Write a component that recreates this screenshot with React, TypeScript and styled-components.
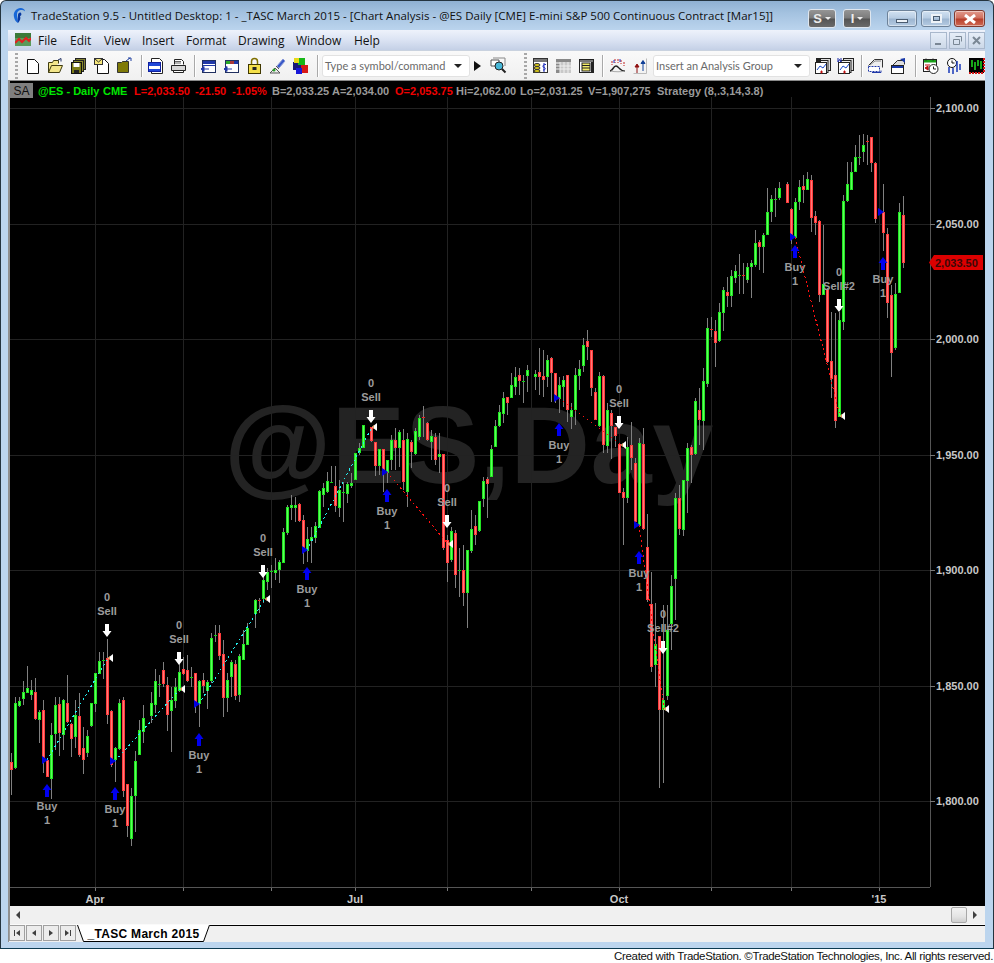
import React from 'react';
import styled, { createGlobalStyle } from 'styled-components';

const Global = createGlobalStyle`
  html, body { margin: 0; padding: 0; background: #fff; }
  #root { width: 994px; height: 963px; overflow: hidden; }
`;

/* ---------- window chrome ---------- */
const Page = styled.div`
  width: 994px;
  height: 963px;
  display: flex;
  flex-direction: column;
  font-family: "Open Sans", "Liberation Sans", sans-serif;
`;
const Win = styled.div`
  box-sizing: border-box;
  width: 994px;
  height: 949px;
  flex: none;
  display: flex;
  flex-direction: column;
  padding: 0 8px 6px 7px;
  border: 1px solid #24343f;
  border-bottom-color: #0c3b52;
  border-radius: 6px 6px 0 0;
  background: linear-gradient(180deg, #8fb0d2 0, #a4c2e0 12px, #bcd5ee 30px, #bcd5ee 100%);
`;
const TitleBar = styled.div`
  height: 29px;
  flex: none;
  display: flex;
  align-items: center;
`;
const TitleLogo = styled.svg`
  margin-left: 4px;
  flex: none;
`;
const TitleText = styled.span`
  margin-left: 5px;
  font-size: 11.5px;
  letter-spacing: 0.01px;
  color: #101010;
  white-space: nowrap;
`;
const TitleRight = styled.div`
  margin-left: auto;
  display: flex;
  align-items: flex-start;
  height: 29px;
`;
const AppBadge = styled.span`
  box-sizing: border-box;
  width: 28px;
  height: 19px;
  margin: 8px 7px 0 0;
  border: 1px solid #dfe6ee;
  border-radius: 3px;
  background: linear-gradient(180deg, #959595 0, #7c7c7c 45%, #555 55%, #6a6a6a 100%);
  color: #ececec;
  font: bold 13px "Liberation Sans", sans-serif;
  display: flex;
  align-items: center;
  justify-content: center;
  gap: 3px;
`;
const Caret = styled.i<{ $c?: string; $s?: number }>`
  display: block;
  width: 0;
  height: 0;
  border-style: solid;
  border-color: ${p => p.$c ?? '#eee'} transparent transparent transparent;
  border-width: ${p => p.$s ?? 3}px ${p => p.$s ?? 3}px 0 ${p => p.$s ?? 3}px;
`;
const CapBtn = styled.span<{ $w: number; $close?: boolean; $ml?: number }>`
  box-sizing: border-box;
  width: ${p => p.$w}px;
  height: 17px;
  margin: 9px 0 0 ${p => p.$ml ?? 0}px;
  border: 1px solid ${p => (p.$close ? '#7d3a30' : '#6d8299')};
  border-radius: 3px;
  box-shadow: inset 0 0 0 1px rgba(255,255,255,.45);
  background: ${p => p.$close
    ? 'linear-gradient(180deg, #e29a8c 0, #d0705f 45%, #b8402c 55%, #cf6a55 100%)'
    : 'linear-gradient(180deg, #d2e2f2 0, #b8cde3 45%, #9db6d1 55%, #b5cbe2 100%)'};
  display: flex;
  align-items: center;
  justify-content: center;
`;
const MinGlyph = styled.i`
  display: block;
  width: 10px;
  height: 2px;
  margin-top: 5px;
  background: #eef3f8;
  border: 1px solid #4a5c70;
`;
const MaxGlyph = styled.i`
  display: block;
  box-sizing: border-box;
  width: 11px;
  height: 9px;
  background: transparent;
  border: 2px solid #eef3f8;
  outline: 1px solid #4a5c70;
  outline-offset: -3px;
`;
const MenuBar = styled.div`
  height: 20px;
  flex: none;
  display: flex;
  align-items: center;
  background: linear-gradient(180deg, #eef2fb 0, #dbe3f3 50%, #c4d0e6 100%);
`;
const MenuLogo = styled.span`
  width: 16px;
  height: 16px;
  margin: 0 7px 0 7px;
  display: flex;
`;
const MenuItem = styled.span<{ $w: number }>`
  width: ${p => p.$w}px;
  font-size: 12px;
  color: #111;
`;
const MdiGroup = styled.div`
  margin-left: auto;
  display: flex;
  gap: 2px;
  height: 17px;
`;
const MdiBtn = styled.span`
  box-sizing: border-box;
  width: 17px;
  height: 17px;
  border: 1px solid #a9b8cc;
  background: linear-gradient(180deg, #e6eef8, #ccd8e8);
  display: flex;
  align-items: center;
  justify-content: center;
`;

/* ---------- toolbar ---------- */
const Toolbar = styled.div`
  height: 30px;
  flex: none;
  display: flex;
  align-items: center;
  background: linear-gradient(180deg, #f9f9f9, #f0f0f0);
  border-top: 1px solid #c9d2df;
  box-sizing: border-box;
`;
const Grip = styled.span<{ $ml: number; $mr: number }>`
  flex: none;
  width: 3px;
  height: 26px;
  margin: 0 ${p => p.$mr}px 0 ${p => p.$ml}px;
  background: repeating-linear-gradient(180deg, #a8a8a8 0 2px, transparent 2px 4px);
`;
const Btn = styled.span<{ $ml?: number; $w?: number }>`
  flex: none;
  width: ${p => p.$w ?? 23}px;
  height: 24px;
  margin-left: ${p => p.$ml ?? 0}px;
  display: flex;
  align-items: center;
  justify-content: center;
`;
const Sep = styled.span<{ $ml: number }>`
  flex: none;
  width: 1px;
  height: 22px;
  margin-left: ${p => p.$ml}px;
  background: #a9a9a9;
  border-right: 1px solid #fff;
`;
const Combo = styled.span<{ $w: number; $ml: number }>`
  box-sizing: border-box;
  flex: none;
  width: ${p => p.$w}px;
  height: 22px;
  margin-left: ${p => p.$ml}px;
  padding: 0 7px 0 2px;
  background: #fff;
  border: 1px solid #e2e2e2;
  border-radius: 3px;
  display: flex;
  align-items: center;
  justify-content: space-between;
  font: 11px Lato, "Open Sans", sans-serif;
  color: #6a6a6a;
  white-space: nowrap;
`;

/* ---------- chart ---------- */
const Pane = styled.div`
  flex: none;
  border-left: 2px solid #8f8f8f;
  display: flex;
  flex-direction: column;
`;
const ChartRule = styled.div`
  height: 1px;
  background: #8a8a8a;
`;
const ChartFrame = styled.div`
  position: relative;
  width: 975px;
  height: 825px;
  background: #000;
`;
const ChartSvg = styled.svg`
  display: block;
  font-family: "Liberation Sans", Arial, sans-serif;
`;
const Status = styled.div`
  position: absolute;
  left: 0;
  top: 1px;
  display: flex;
  align-items: center;
  height: 17px;
  font: bold 11px "Liberation Sans", Arial, sans-serif;
  white-space: nowrap;
`;
const SaBox = styled.span`
  width: 23px;
  height: 15px;
  margin-right: 5px;
  background: #7f7f7f;
  color: #111;
  font-weight: normal;
  font-size: 12px;
  display: flex;
  align-items: center;
  justify-content: center;
`;
const Stat = styled.span<{ $c: 'g' | 'r' | 'n'; $x: number }>`
  position: absolute;
  left: ${p => p.$x}px;
  color: ${p => (p.$c === 'g' ? '#00e800' : p.$c === 'r' ? '#f00000' : '#9a9a9a')};
`;
const Watermark = styled.text`
  font-size: 110px;
  font-weight: bold;
  letter-spacing: 0.5px;
  fill: #232323;
`;
const AxisLabel = styled.text`
  font-size: 11px;
  font-weight: bold;
  fill: #c8c8c8;
`;
const SigLabel = styled.text`
  font-size: 11px;
  font-weight: bold;
  fill: #9c9c9c;
  text-anchor: middle;
`;
const TagLabel = styled.text`
  font-size: 11px;
  font-weight: bold;
  fill: #3a0808;
`;

/* ---------- bottom ---------- */
const ScrollBar = styled.div`
  height: 19px;
  display: flex;
  align-items: center;
  justify-content: space-between;
  padding: 0 6px 0 4px;
  background: #f0f0f0;
  border-bottom: 1px solid #fafafa;
  box-sizing: border-box;
`;
const ScrollEnd = styled.div`
  display: flex;
  align-items: center;
  gap: 4px;
`;
const Thumb = styled.span`
  box-sizing: border-box;
  width: 16px;
  height: 16px;
  border: 1px solid #a8a8a8;
  border-radius: 2px;
  background: linear-gradient(180deg, #f2f2f2 0, #e4e4e4 60%, #cfcfcf 100%);
`;
const TabRow = styled.div`
  height: 17px;
  display: flex;
  margin-left: -1px;
  background: #f0f0f0;
`;
const TabNav = styled.span`
  box-sizing: border-box;
  flex: none;
  width: 16px;
  height: 16px;
  margin-right: 1px;
  border: 1px solid #a0a0a0;
  background: #ececec;
  display: flex;
  align-items: center;
  justify-content: center;
`;
const Tab = styled.div`
  position: relative;
  flex: none;
  width: 133px;
  height: 17px;
  display: flex;
  align-items: center;
  justify-content: center;
  font: bold 12px "Liberation Sans", Arial, sans-serif;
  letter-spacing: 0.3px;
  color: #000;
`;
const TabShape = styled.svg`
  position: absolute;
  left: 0;
  top: 0;
`;
const TabLabel = styled.span`
  position: relative;
`;
const TabFill = styled.div`
  flex: 1;
  border-top: 1px solid #000;
`;
const Footer = styled.div`
  height: 14px;
  flex: none;
  padding-right: 1px;
  text-align: right;
  font: 11.5px/14px "Liberation Sans", Arial, sans-serif;
  letter-spacing: -0.34px;
  color: #111;
  white-space: nowrap;
`;

/* ---------- candle data: [wick top, body top, body bottom, wick bottom, colour], in 3x crop units ---------- */
type Row = [number, number, number, number, string] | null;
type Seg = { o: number; n: number; rows: Row[] };
const segs: Seg[] = [
  { o: 580, n: 0, rows: [
    [520,546,570,645,'r'],[350,370,564,566,'g'],[350,364,378,380,'g'],[303,337,357,375,'g'],[258,325,339,340,'g'],
    [300,331,345,360,'g'],[295,337,417,420,'r'],[390,397,419,490,'g'],[360,391,536,580,'r'],[540,541,591,592,'r'],
    [430,465,597,656,'g'],[352,376,461,510,'g'],[350,373,459,528,'r'],[358,361,465,510,'g'],[285,370,425,430,'r'],
    [430,433,477,532,'r'],[360,406,470,505,'g'],[340,409,524,530,'r'],[440,505,540,583,'r'],[450,469,519,530,'g'],
    [370,370,437,440,'g'],[280,280,371,395,'g'],[215,243,281,283,'g'],[215,241,241,297,'g'],[177,235,404,432,'r'],
    [390,394,556,560,'r'],[500,505,541,605,'g'],[358,370,507,510,'g'],[350,361,632,650,'r'],[612,612,737,770,'r'],
    [625,649,776,798,'g'],[513,544,647,757,'g'],[420,451,525,525,'g'],[375,415,455,490,'g'],null,
    [336,370,407,430,'g'],[268,304,374,400,'g'],[285,313,313,350,'g'],[245,271,313,320,'r'],[290,316,404,452,'r'],
    [320,361,392,515,'g'],[295,322,362,385,'g'],[240,277,333,335,'g'],[230,268,281,285,'r'],[225,271,302,305,'r'],
    [260,291,291,320,'g'],[280,280,370,400,'r'],[300,304,372,440,'g'],[280,301,317,340,'r'],[300,307,333,387,'g'],
    [160,175,304,308,'g'],[135,165,165,185,'g'],[135,160,227,240,'r'],[180,223,353,410,'r'],[280,301,353,395,'g'],
    [240,247,290,350,'g'],[240,253,347,360,'r'],[222,229,344,365,'g'],[150,193,239,240,'g'],[130,145,194,195,'g'],
    null,[58,61,103,145,'g'],[55,59,59,100,'r'],
  ] },
  { o: 480, n: 63, rows: [
    [270,300,357,370,'g'],[265,277,305,330,'g'],[255,274,274,325,'g'],[235,270,280,300,'g'],[240,246,270,310,'g'],
    [145,156,248,250,'g'],[75,81,160,165,'g'],
  ] },
  { o: 340, n: 70, rows: [
    [465,495,503,540,'g'],[470,495,503,545,'g'],[490,492,543,545,'r'],[525,541,630,672,'r'],[560,597,632,665,'g'],
    [560,591,604,668,'g'],[545,559,594,610,'g'],[450,453,564,565,'g'],[430,444,465,500,'g'],[395,423,456,460,'g'],
    [378,427,427,430,'g'],[378,438,498,515,'r'],[420,450,504,530,'g'],[425,457,457,545,'g'],[425,432,462,490,'g'],
    [400,429,438,445,'g'],[339,339,420,420,'g'],[310,324,340,345,'g'],[255,255,324,325,'g'],null,
    [262,262,303,305,'r'],[306,306,378,408,'r'],[327,327,378,405,'g'],[327,327,390,455,'r'],[360,360,399,430,'g'],
    [285,300,360,390,'g'],[265,300,324,390,'r'],[270,276,324,380,'g'],[268,300,426,450,'r'],[280,297,456,500,'g'],
    [300,306,336,385,'r'],[265,273,342,345,'g'],[225,234,290,300,'g'],[198,232,232,290,'r'],[245,249,300,302,'r'],
    [270,288,306,360,'g'],[280,291,360,375,'r'],[280,342,351,400,'g'],[342,342,624,630,'r'],[585,600,668,725,'r'],
    [560,573,660,665,'g'],[570,579,704,745,'r'],[625,691,691,770,'g'],[615,690,760,797,'r'],[630,630,760,863,'g'],
    [510,568,634,640,'g'],[525,558,585,615,'r'],[484,484,573,575,'g'],[410,423,477,500,'g'],[410,417,432,535,'r'],
    [315,327,411,412,'g'],[240,258,321,322,'g'],[195,216,258,262,'g'],[155,174,222,250,'g'],[170,171,189,225,'r'],
    [100,135,174,175,'g'],[82,111,141,165,'g'],[85,105,123,165,'r'],[105,124,124,188,'g'],[75,90,108,155,'g'],
    null,[90,102,111,150,'g'],[25,96,111,165,'r'],[30,108,120,172,'r'],[45,60,111,140,'g'],
    [50,54,99,185,'r'],[99,99,168,190,'r'],[110,135,177,220,'g'],[108,120,141,200,'g'],[105,105,210,245,'r'],
    [190,210,231,268,'g'],[85,105,210,255,'g'],[60,87,108,150,'g'],
  ] },
  { o: 320, n: 143, rows: [
    [55,75,137,155,'g'],[30,63,80,120,'r'],[90,90,203,228,'r'],[205,216,299,300,'r'],[155,168,317,320,'g'],
    [165,168,375,400,'r'],[250,270,378,400,'g'],[270,280,317,416,'r'],[320,321,347,380,'r'],[370,372,519,520,'r'],
    [505,516,533,675,'r'],[350,381,533,550,'g'],[305,375,414,450,'r'],[415,429,606,620,'r'],[355,369,618,620,'g'],
    [325,372,627,630,'r'],[583,681,840,845,'r'],[755,852,1041,1055,'r'],[848,972,1035,1100,'g'],[948,948,1170,1405,'r'],
    [855,1140,1170,1390,'g'],[855,930,1128,1140,'g'],[765,798,912,990,'g'],[520,534,777,900,'g'],[495,534,627,645,'r'],
    [480,480,630,648,'g'],[370,384,483,580,'g'],[375,381,405,490,'r'],[235,243,402,405,'g'],[205,270,300,375,'r'],
    [145,183,303,390,'g'],[-6,24,192,200,'g'],[-10,28,28,50,'r'],[0,33,69,140,'r'],
  ] },
  { o: 120, n: 177, rows: [
    [550,576,663,665,'g'],[500,510,578,632,'g'],[470,516,527,560,'r'],[450,468,527,560,'g'],[435,453,473,490,'g'],
    [403,466,466,522,'g'],[430,466,466,522,'r'],[430,441,480,490,'g'],[420,429,441,533,'g'],[330,369,435,440,'g'],
    [360,366,381,450,'r'],[340,345,381,460,'g'],[205,276,345,345,'g'],[225,237,276,305,'g'],[205,237,237,290,'g'],
    [185,204,234,240,'g'],null,[185,192,249,250,'r'],[265,267,345,372,'r'],[235,246,354,354,'g'],
    [180,201,246,270,'g'],[165,198,210,250,'r'],[155,177,210,210,'g'],[165,180,294,335,'r'],[272,288,309,345,'r'],
    [300,303,525,545,'r'],[315,492,525,525,'g'],[505,507,726,730,'r'],[575,723,777,835,'r'],[580,765,903,925,'r'],
    [575,600,891,890,'g'],[225,243,606,630,'g'],[125,192,243,245,'g'],[125,156,210,210,'g'],[75,111,156,155,'g'],
    [45,112,112,135,'g'],[42,75,96,125,'g'],[45,63,63,135,'r'],[50,51,129,155,'r'],[125,129,297,310,'r'],
    null,[192,276,339,392,'r'],[325,342,549,595,'r'],[495,525,699,770,'r'],[490,522,684,690,'g'],
    [250,276,519,520,'g'],[228,285,429,445,'r'],
  ] },
];

const Candle = ({ n, o, r }: { n: number; o: number; r: Exclude<Row, null> }) => {
  const x = 10 + 4 * n;
  const y = (v: number) => Math.round(o + v / 3);
  const [wt, bt, bb, wb, c] = r;
  const red = c === 'r';
  const doji = bt === bb;
  const top = y(bt), h = Math.max(1, y(bb) - y(bt));
  return (
    <g>
      <rect x={x + 1} y={y(wt)} width={1} height={Math.max(1, y(wb) - y(wt))} fill="#808080" />
      {doji
        ? <rect x={x} y={top} width={3} height={1} fill={red ? '#f02020' : '#10d010'} />
        : <>
            <rect x={x} y={top} width={3} height={h} fill={red ? '#ff3c3c' : '#22e622'} />
            {h > 2 && <rect x={x + 1} y={top + 1} width={1} height={h - 2} fill={red ? '#ff7a7a' : '#5cff5c'} />}
          </>}
    </g>
  );
};

const buys: [number, number][] = [[47,784],[115,787],[199,733],[307,567],[387,489],[559,423],[639,551],[795,245],[883,257]];
const sells: [number, number, string][] = [
  [107,624,'Sell'],[179,652,'Sell'],[263,565,'Sell'],[371,410,'Sell'],[447,515,'Sell'],[619,416,'Sell'],[663,641,'Sell#2'],[839,299,'Sell#2'],
];
const entries: [number, number][] = [[42,760],[110,761],[194,704],[302,550],[382,472],[554,398],[634,525],[790,237],[878,212]];
const exits: [number, number][] = [[108,658],[180,689],[265,599],[372,427],[448,544],[621,445],[664,709],[840,416]];
const trades: [number, number, number, number, string][] = [
  [47,760,108,658,'#22f0f0'],[115,761,180,689,'#22f0f0'],[199,704,265,599,'#22f0f0'],[307,550,372,427,'#22f0f0'],
  [387,472,448,544,'#ff1010'],[559,398,621,445,'#ff1010'],[639,525,664,709,'#ff1010'],[795,237,840,416,'#ff1010'],
];
const gridX = [95,183,271,355,447,531,619,711,791,879];
const prices: [number, string][] = [[108,'2,100.00'],[224,'2,050.00'],[339,'2,000.00'],[455,'1,950.00'],[570,'1,900.00'],[686,'1,850.00'],[801,'1,800.00']];
const months: [number, string][] = [[95,'Apr'],[355,'Jul'],[619,'Oct'],[879,"'15"]];

const Chart = () => (
  <ChartSvg width={975} height={825} viewBox="10 81 975 825">
    <Watermark x={224} y={483}>@ES,Day</Watermark>
    {gridX.map(x => <rect key={x} x={x} y={97} width={1} height={790} fill="#222" />)}
    {prices.map(([y]) => <rect key={y} x={10} y={y} width={920} height={1} fill="#222" />)}
    {segs.map(s => s.rows.map((r, i) => r && <Candle key={s.n + i} n={s.n + i} o={s.o} r={r} />))}
    {trades.map(([a, b, c, d, col], i) => (
      <line key={i} x1={a} y1={b} x2={c} y2={d} stroke={col} strokeWidth={1} strokeDasharray="2 3" shapeRendering="crispEdges" />
    ))}
    {entries.map(([x, y], i) => <polygon key={i} points={`${x},${y - 4} ${x + 6},${y} ${x},${y + 4}`} fill="#0000e0" />)}
    {exits.map(([x, y], i) => (
      <g key={i}>
        <polygon points={`${x},${y} ${x + 5},${y - 4} ${x + 5},${y + 4}`} fill="#fff" />
        <polygon points={`${x},${y} ${x + 2},${y - 2} ${x + 2},${y + 2}`} fill="#e8a060" />
      </g>
    ))}
    {buys.map(([x, y], i) => (
      <g key={i}>
        <path d={`M${x} ${y}l4.500 6h-2.500v7h-4v-7h-2.500z`} fill="#0000f0" />
        <SigLabel x={x} y={y + 26}>Buy</SigLabel>
        <SigLabel x={x} y={y + 40}>1</SigLabel>
      </g>
    ))}
    {sells.map(([x, y, t], i) => (
      <g key={i}>
        <SigLabel x={x} y={y - 9}>{t}</SigLabel>
        <SigLabel x={x} y={y - 23}>0</SigLabel>
        <path d={`M${x} ${y + 13}l-4.500-6h2.500v-7h4v7h2.500z`} fill="#fff" />
      </g>
    ))}
    <rect x={930} y={97} width={1} height={790} fill="#555" />
    <rect x={10} y={887} width={920} height={1} fill="#555" />
    {prices.map(([y, t]) => (
      <g key={t}>
        <rect x={930} y={y} width={5} height={1} fill="#777" />
        <AxisLabel x={936} y={y + 4}>{t}</AxisLabel>
      </g>
    ))}
    {gridX.map(x => <rect key={x} x={x} y={888} width={1} height={3} fill="#777" />)}
    {months.map(([x, t]) => <AxisLabel key={t} x={x} y={903} textAnchor="middle">{t}</AxisLabel>)}
    <polygon points="929,262.500 934,255 983,255 983,270 934,270" fill="#dc0000" />
    <TagLabel x={935} y={267}>2,033.50</TagLabel>
  </ChartSvg>
);

/* ---------- toolbar icons ---------- */
const I = ({ children }: { children: React.ReactNode }) => (
  <svg width={17} height={18} viewBox="0 0 17 18">{children}</svg>
);
const Page17 = ({ x = 3 }: { x?: number }) => (
  <path d={`M${x + .5} 2.500h7l4 4v10h-11z`} fill="#fff" stroke="#111" />
);
const Win17 = ({ bar = '#2038a8' }: { bar?: string }) => (
  <>
    <rect x="2.500" y="3.500" width="13" height="12" fill="#fff" stroke="#203060" />
    <rect x="3" y="4" width="12" height="3" fill={bar} />
  </>
);
const icons: React.ReactNode[] = [
  <I key="new"><Page17 /></I>,
  <I key="open"><path d="M1.500 15.500v-10h4l1 -2h5v3M1.500 15.500l3-7h11l-3 7z" fill="#f3e68a" stroke="#403c10" /><path d="M11 3l3-1.500M14 1.500v3" stroke="#203060" fill="none" /></I>,
  <I key="saveall"><rect x="5.500" y="1.500" width="10" height="11" fill="#7f7f30" stroke="#222" /><rect x="3.500" y="3.500" width="10" height="11" fill="#8a8a2a" stroke="#222" /><rect x="1.500" y="5.500" width="10" height="11" fill="#7c7c16" stroke="#111" /><rect x="3.500" y="6" width="6" height="4" fill="#fff" /><rect x="4" y="13" width="5" height="3" fill="#222" /></I>,
  <I key="mail"><Page17 x={4} /><rect x="1.500" y="1.500" width="8" height="6" fill="#f6e77a" stroke="#333" /><path d="M2 2l3.500 3 3.500-3" fill="none" stroke="#333" /></I>,
  <I key="folder"><path d="M1.500 15.500v-10h4l1-1h6v11z" fill="#7f7a08" stroke="#333" /><path d="M10 4l4-3M12 1h3v3" fill="none" stroke="#2040a0" /></I>,
  <I key="preview"><path d="M4.500 1.500h8l3 3v12h-11z" fill="#fff" stroke="#222" /><rect x="1.500" y="5.500" width="12" height="9" fill="#fff" stroke="#1020a0" /><rect x="2" y="6" width="11" height="3" fill="#2048d8" /><rect x="2" y="12" width="11" height="2" fill="#2048d8" /></I>,
  <I key="print"><path d="M4.500 7.500v-5h7l2 2v3" fill="#fff" stroke="#222" /><path d="M1.500 8.500h14v5h-14z" fill="#d8d8d8" stroke="#222" /><path d="M3.500 13.500h10v2h-10z" fill="#fff" stroke="#222" /><path d="M5 4.500h6M5 6h6" stroke="#666" /></I>,
  <I key="wa1"><Win17 /><rect x="3" y="8" width="12" height="1" fill="#2038a8" /><path d="M1 12l3-2.500v5zM4 12h5" fill="#2038a8" stroke="#2038a8" /></I>,
  <I key="wa2"><Win17 bar="#a83838" /><rect x="3" y="4" width="4" height="3" fill="#28a828" /><rect x="11" y="4" width="4" height="3" fill="#2038a8" /><path d="M1 12l3-2.500v5zM4 12h5" fill="#2038a8" stroke="#2038a8" /></I>,
  <I key="lock"><path d="M5.500 8V4.500a3 3 0 0 1 6 0V8" fill="none" stroke="#807000" strokeWidth="1.500" /><rect x="2.500" y="7.500" width="12" height="9" fill="#f4e04a" stroke="#403800" /><rect x="6.500" y="10" width="4" height="3" fill="#222" /></I>,
  <I key="sat"><path d="M8 9l6-7 2 2-6 7z" fill="#3858c8" stroke="#8898d8" /><path d="M7 9l3 3M1 16l5-5 5 5z" fill="#eee" stroke="#555" /><circle cx="5" cy="13" r="1.500" fill="#28a028" /></I>,
  <I key="cubes"><rect x="1" y="5" width="8" height="8" fill="#181878" /><rect x="6" y="1" width="7" height="7" fill="#18b818" /><rect x="2" y="1" width="5" height="5" fill="#e8d818" /><rect x="9" y="8" width="7" height="8" fill="#d81818" /><rect x="4" y="11" width="6" height="6" fill="#1818d8" /></I>,
  <I key="go"><path d="M1 3h8v6H1z" fill="#fff" stroke="#555" /><circle cx="9" cy="9" r="4" fill="#48b8d8" stroke="#222" /><path d="M12 12l3.500 3.500" stroke="#222" strokeWidth="2" /><path d="M3 1h12v8" fill="none" stroke="#888" /></I>,
  <I key="ta"><rect x="1.500" y="1.500" width="14" height="14" fill="#fff" stroke="#333" /><rect x="2" y="2" width="13" height="3" fill="#777" /><ellipse cx="5" cy="8" rx="3" ry="1.500" fill="#d8c818" stroke="#333" /><ellipse cx="5" cy="11" rx="3" ry="1.500" fill="#d8c818" stroke="#333" /><ellipse cx="5" cy="14" rx="3" ry="1.500" fill="#d8c818" stroke="#333" /><path d="M12 6v9M14 7.500c-3-1-4 3 -2 3s1.500 3-1 2.500" fill="none" stroke="#1828b8" /></I>,
  <I key="grid-off"><rect x="1" y="2" width="15" height="14" fill="#c8c8c8" /><rect x="1" y="2" width="15" height="3" fill="#888" /><rect x="1" y="7" width="4" height="9" fill="#8a8a8a" /><path d="M1 9h15M1 12h15M5 5v11M9 5v11M13 5v11" stroke="#f0f0f0" /></I>,
  <I key="grid"><rect x="1.500" y="2.500" width="14" height="13" fill="#fff" stroke="#222" /><rect x="2" y="3" width="13" height="2" fill="#777" /><rect x="4" y="6" width="8" height="8" fill="#f4ec6a" stroke="#222" /><path d="M4 8.500h8M4 11h8" stroke="#222" /><rect x="13" y="5" width="2" height="10" fill="#222" /></I>,
  <I key="curve"><path d="M1 14c3 0 3-5 6-5s3 5 9 5" fill="none" stroke="#222" strokeWidth="1.500" /><path d="M2 14c3 1 11 1 14 0" fill="none" stroke="#aaa" /><path d="M3 4v4M6 2v4M9 2v4M12 3v4M15 5v4" stroke="#c02020" strokeDasharray="2 1" /><path d="M5 3v3M11 2v3" stroke="#2038c8" /></I>,
  <I key="updown"><path d="M5 16V8M3 10h4l-2-3z" stroke="#901010" fill="#901010" /><path d="M11 14V4M9 6.500h4l-2-3z" stroke="#104098" fill="#104098" /><path d="M14.500 1.500v15h-13" fill="none" stroke="#bbb" /></I>,
  <I key="ins1"><rect x="6.500" y="1.500" width="10" height="12" fill="#ddd" stroke="#222" /><rect x="4" y="3.500" width="10" height="12" fill="#eee" stroke="#222" /><rect x="1.500" y="5.500" width="11" height="11" fill="#fff" stroke="#222" /><rect x="2" y="1" width="5" height="4" fill="#222" /><path d="M3 13l3-4 3 2 3-4" fill="none" stroke="#1848c8" /><path d="M6 15h3M7.500 13.500v3" stroke="#c01010" /></I>,
  <I key="ins2"><rect x="6.500" y="1.500" width="10" height="12" fill="#ddd" stroke="#222" /><rect x="4" y="3.500" width="10" height="12" fill="#eee" stroke="#222" /><rect x="1.500" y="5.500" width="11" height="11" fill="#fff" stroke="#222" /><path d="M1 1v4l1.500-2.500L4 5V1" fill="none" stroke="#1828a8" /><path d="M3 13l3-4 3 2 3-4" fill="none" stroke="#1848c8" /><path d="M6 15h3M7.500 13.500v3" stroke="#c01010" /></I>,
  <I key="doc1"><path d="M1.500 8.500l6-6h8v8" fill="#eee" stroke="#333" /><path d="M1.500 9.500h11v5h-11z" fill="#fff" stroke="#2038a8" strokeDasharray="2 1" /><path d="M3 8l5-4h6" fill="none" stroke="#888" /><path d="M5 15.500h9v-2" fill="none" stroke="#2038a8" /></I>,
  <I key="doc2"><path d="M2.500 8.500l5-5h7v4" fill="#ddd" stroke="#333" /><rect x="1.500" y="8.500" width="12" height="8" fill="#fff" stroke="#222" /><rect x="2" y="9" width="11" height="2" fill="#1838a8" /><path d="M10 2l5-1v5z" fill="#1838a8" /></I>,
  <I key="cal"><rect x="1.500" y="2.500" width="13" height="12" fill="#fff" stroke="#222" /><rect x="2" y="3" width="12" height="2.500" fill="#18a018" /><path d="M4 1.500v2M11 1.500v2" stroke="#222" /><path d="M3 8h5M3 11l3-2v4z" stroke="#c01010" fill="#c01010" /><circle cx="11.500" cy="12" r="4.500" fill="#fff" stroke="#222" /><path d="M11.500 9.500V12h2.500" fill="none" stroke="#222" /></I>,
  <I key="clockbars"><circle cx="7" cy="6" r="4.500" fill="#fff" stroke="#111" /><path d="M7 3.500V6h2.500" fill="none" stroke="#111" /><path d="M4 16V10M8 17v-6M12 15V4M15 13V7" stroke="#1838b8" strokeWidth="1.500" /></I>,
  <I key="chartbox"><rect x="1" y="1" width="15" height="15" fill="#000" /><path d="M4 3v7M7 5v8M10 3v6M13 4v8" stroke="#20e020" strokeWidth="1.500" /><path d="M1 16h15M16 1v15" stroke="#d81818" strokeDasharray="2 1" strokeWidth="2" /></I>,
];
const ic = (i: number) => icons[i];

const Glyph = ({ d }: { d: string }) => (
  <svg width={8} height={10} viewBox="0 0 8 10"><path d={d} fill="#404040" /></svg>
);

export default function App() {
  return (
    <Page>
      <Global />
      <Win>
        <TitleBar>
          <TitleLogo width={14} height={17} viewBox="0 0 14 17">
            <path d="M8 1C3 2 1 6 2 10c.5 3 2 5 4 6 0-3-1-5-1-8s1-5 5-5c2 0 3 1 3 2 0-3-2-4-5-4z" fill="#1868d8" />
            <path d="M6 8c0-2 2-3 3-2s0 3-1 3c1 2 0 5-2 7-1-3 0-6 0-8z" fill="#0838a0" />
          </TitleLogo>
          <TitleText>TradeStation 9.5 - Untitled Desktop: 1 - _TASC March 2015 - [Chart Analysis - @ES Daily [CME] E-mini S&amp;P 500 Continuous Contract [Mar15]]</TitleText>
          <TitleRight>
            <AppBadge>S<Caret /></AppBadge>
            <AppBadge>I<Caret /></AppBadge>
            <CapBtn $w={30} $ml={9}><MinGlyph /></CapBtn>
            <CapBtn $w={30} $ml={4}><MaxGlyph /></CapBtn>
            <CapBtn $w={31} $ml={3} $close>
              <svg width={14} height={10} viewBox="0 0 14 10"><path d="M2 1l10 8M12 1L2 9" stroke="#fff" strokeWidth="3" /></svg>
            </CapBtn>
          </TitleRight>
        </TitleBar>
        <MenuBar>
          <MenuLogo>
            <svg width={16} height={16} viewBox="0 0 16 16">
              <rect x="0" y="1" width="16" height="13" fill="#5a9a5a" />
              <rect x="0" y="1" width="16" height="5" fill="#3a7a3a" />
              <path d="M0 11l4-4 3 3 4-4 3 3 2-3" fill="none" stroke="#e02020" strokeWidth="2" />
            </svg>
          </MenuLogo>
          <MenuItem $w={32}>File</MenuItem>
          <MenuItem $w={34}>Edit</MenuItem>
          <MenuItem $w={38}>View</MenuItem>
          <MenuItem $w={44}>Insert</MenuItem>
          <MenuItem $w={52}>Format</MenuItem>
          <MenuItem $w={58}>Drawing</MenuItem>
          <MenuItem $w={58}>Window</MenuItem>
          <MenuItem $w={40}>Help</MenuItem>
          <MdiGroup>
            <MdiBtn><svg width={11} height={11} viewBox="0 0 11 11"><rect x="2" y="8" width="6" height="2" fill="#7a8794" /></svg></MdiBtn>
            <MdiBtn><svg width={11} height={11} viewBox="0 0 11 11"><path d="M3.500 1.500h6v5M1.500 4.500h6v5h-6z" fill="none" stroke="#7a8794" /></svg></MdiBtn>
            <MdiBtn><svg width={11} height={11} viewBox="0 0 11 11"><path d="M2 2l7 7M9 2l-7 7" stroke="#7a8794" strokeWidth="2" /></svg></MdiBtn>
          </MdiGroup>
        </MenuBar>
        <Toolbar>
          <Grip $ml={7} $mr={3} />
          <Btn>{ic(0)}</Btn><Btn>{ic(1)}</Btn><Btn>{ic(2)}</Btn><Btn>{ic(3)}</Btn><Btn>{ic(4)}</Btn>
          <Sep $ml={5} />
          <Btn $ml={1}>{ic(5)}</Btn><Btn>{ic(6)}</Btn>
          <Sep $ml={4} />
          <Btn $ml={1}>{ic(7)}</Btn><Btn>{ic(8)}</Btn><Btn>{ic(9)}</Btn><Btn>{ic(10)}</Btn><Btn>{ic(11)}</Btn>
          <Sep $ml={5} />
          <Combo $w={148} $ml={3}>Type a symbol/command<Caret $c="#222" $s={4} /></Combo>
          <Btn $w={14}><svg width={7} height={10} viewBox="0 0 7 10"><path d="M0 0l7 5-7 5z" fill="#111" /></svg></Btn>
          <Btn $ml={3}>{ic(12)}</Btn>
          <Grip $ml={14} $mr={2} />
          <Btn>{ic(13)}</Btn><Btn>{ic(14)}</Btn><Btn>{ic(15)}</Btn>
          <Sep $ml={4} />
          <Btn $ml={2}>{ic(16)}</Btn><Btn>{ic(17)}</Btn>
          <Combo $w={157} $ml={1}>Insert an Analysis Group<Caret $c="#222" $s={4} /></Combo>
          <Btn $ml={1}>{ic(18)}</Btn><Btn>{ic(19)}</Btn>
          <Sep $ml={4} />
          <Btn $ml={1}>{ic(20)}</Btn><Btn>{ic(21)}</Btn>
          <Sep $ml={5} />
          <Btn $ml={2}>{ic(22)}</Btn><Btn>{ic(23)}</Btn><Btn>{ic(24)}</Btn>
        </Toolbar>
        <Pane>
          <ChartRule />
          <ChartFrame>
            <Chart />
            <Status>
              <SaBox>SA</SaBox>
              <Stat $c="g" $x={28}>@ES - Daily</Stat>
              <Stat $c="g" $x={93}>CME</Stat>
              <Stat $c="r" $x={124}>L=2,033.50</Stat>
              <Stat $c="r" $x={185}>-21.50</Stat>
              <Stat $c="r" $x={222}>-1.05%</Stat>
              <Stat $c="n" $x={262}>B=2,033.25</Stat>
              <Stat $c="n" $x={322}>A=2,034.00</Stat>
              <Stat $c="r" $x={385}>O=2,053.75</Stat>
              <Stat $c="n" $x={446}>Hi=2,062.00</Stat>
              <Stat $c="n" $x={510}>Lo=2,031.25</Stat>
              <Stat $c="n" $x={578}>V=1,907,275</Stat>
              <Stat $c="n" $x={647}>Strategy (8,.3,14,3.8)</Stat>
            </Status>
          </ChartFrame>
          <ScrollBar>
            <Glyph d="M6 1v8L2 5z" />
            <ScrollEnd><Thumb /><Glyph d="M2 1v8l4-4z" /></ScrollEnd>
          </ScrollBar>
          <TabRow>
            <TabNav><Glyph d="M1 2h1v6H1zM7 2v6L3 5z" /></TabNav>
            <TabNav><Glyph d="M6 2v6L2 5z" /></TabNav>
            <TabNav><Glyph d="M2 2v6l4-3z" /></TabNav>
            <TabNav><Glyph d="M6 2h1v6H6zM1 2v6l4-3z" /></TabNav>
            <Tab>
              <TabShape width={133} height={17} viewBox="0 0 133 17">
                <path d="M.5 0l6 16.500h120l6-16.500z" fill="#fff" />
                <path d="M.5 0l6 16.500h120l6-16.500" fill="none" stroke="#000" />
              </TabShape>
              <TabLabel>_TASC March 2015</TabLabel>
            </Tab>
            <TabFill />
          </TabRow>
        </Pane>
      </Win>
      <Footer>Created with TradeStation. ©TradeStation Technologies, Inc. All rights reserved.</Footer>
    </Page>
  );
}
